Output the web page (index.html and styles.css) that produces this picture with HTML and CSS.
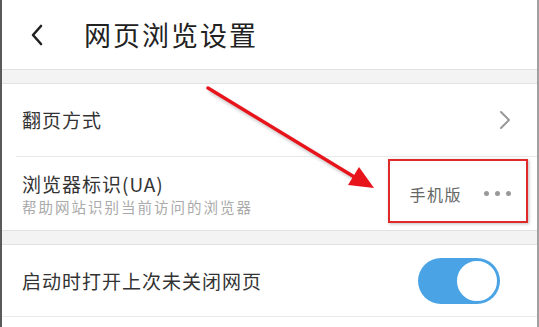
FILE: index.html
```html
<!DOCTYPE html>
<html lang="zh">
<head>
<meta charset="utf-8">
<link rel="stylesheet" href="styles.css">
</head>
<body>
<div class="frame">
  <header class="header">
    <svg class="back" width="14" height="22" viewBox="0 0 14 22"><path d="M11 2 L3 11 L11 20" fill="none" stroke="#222" stroke-width="2.6" stroke-linecap="round" stroke-linejoin="round"/></svg>
    <h1 class="title">网页浏览设置</h1>
  </header>
  <div class="band"></div>
  <div class="group">
    <div class="row row-line">
      <span class="label">翻页方式</span>
      <svg class="chev" width="12" height="20" viewBox="0 0 12 20"><path d="M2 2 L10 10 L2 18" fill="none" stroke="#999" stroke-width="2" stroke-linecap="round" stroke-linejoin="round"/></svg>
    </div>
    <div class="row">
      <div class="texts">
        <span class="label">浏览器标识(UA)</span>
        <span class="sub">帮助网站识别当前访问的浏览器</span>
      </div>
      <div class="value">
        <span class="value-text">手机版</span>
        <span class="dots"><i></i><i></i><i></i></span>
      </div>
    </div>
  </div>
  <div class="band"></div>
  <div class="group group-bottom">
    <div class="row row-toggle">
      <span class="label">启动时打开上次未关闭网页</span>
      <span class="toggle"><span class="knob"></span></span>
    </div>
  </div>
  <div class="redbox"></div>
  <svg class="arrow" width="539" height="327" viewBox="0 0 539 327">
    <defs>
      <filter id="sh" x="-20%" y="-20%" width="140%" height="140%">
        <feGaussianBlur stdDeviation="1.6"/>
      </filter>
    </defs>
    <g filter="url(#sh)" opacity="0.35">
      <line x1="210" y1="91" x2="360" y2="182" stroke="#777" stroke-width="4"/>
    </g>
    <line x1="208" y1="88" x2="356" y2="178" stroke="#e8141b" stroke-width="3.4" stroke-linecap="round"/>
    <polygon points="374,188 348,185 359,167" fill="#e8141b"/>
  </svg>
</div>
</body>
</html>
```
FILE: styles.css
```css
* { box-sizing: border-box; }
html, body { margin: 0; padding: 0; background: #fff; }
body { font-family: "Noto Sans CJK SC", "Noto Sans", sans-serif; color: #333; }
.frame {
  position: relative;
  width: 539px;
  height: 327px;
  overflow: hidden;
  border-left: 2px solid #5a5a5a;
  border-right: 2px solid #a0a0a0;
  background: #fff;
}
.header {
  height: 69px;
  display: flex;
  align-items: center;
  padding-left: 28px;
}
.back { display: block; }
.title {
  margin: 0 0 0 40px;
  font-size: 27px;
  font-weight: 400;
  letter-spacing: 2px;
  color: #222;
  line-height: 1;
}
.band {
  height: 15px;
  background: #f3f3f3;
  border-top: 1px solid #e2e2e2;
  border-bottom: 1px solid #e2e2e2;
}
.group { display: flex; flex-direction: column; }
.row {
  height: 73px;
  display: flex;
  align-items: center;
  justify-content: space-between;
  padding-left: 20px;
  padding-right: 26px;
}
.row-line { border-bottom: 1px solid #e8e8e8; margin-left: 14px; padding-left: 6px; }
.label { font-size: 19px; color: #333; letter-spacing: 1px; line-height: 24px; }
.texts { display: flex; flex-direction: column; gap: 2px; }
.sub { font-size: 14.5px; color: #aaa; letter-spacing: 2px; line-height: 18px; }
.value { display: flex; align-items: center; gap: 22px; padding-right: 0; }
.value-text { font-size: 16px; color: #666; letter-spacing: 1.5px; }
.dots { display: flex; gap: 6px; }
.dots i { width: 5px; height: 5px; border-radius: 50%; background: #999; display: block; }
.chev { display: block; }
.group-bottom { border-bottom: 1px solid #eaeaea; margin-left: 0; }
.row-toggle { height: 71px; padding-right: 37px; }
.toggle {
  width: 82px;
  height: 46px;
  border-radius: 23px;
  background: #4aa3e4;
  display: flex;
  align-items: center;
  justify-content: flex-end;
  padding-right: 1px;
}
.knob {
  width: 44px;
  height: 44px;
  border-radius: 50%;
  background: #fff;
  border: 2px solid #4aa3e4;
}
.redbox {
  position: absolute;
  left: 386px;
  top: 159px;
  width: 140px;
  height: 64px;
  border: 2px solid #e02a2a;
  box-shadow: 1px 1px 3px rgba(0,0,0,0.25);
}
.arrow { position: absolute; left: -2px; top: 0; pointer-events: none; }
```
